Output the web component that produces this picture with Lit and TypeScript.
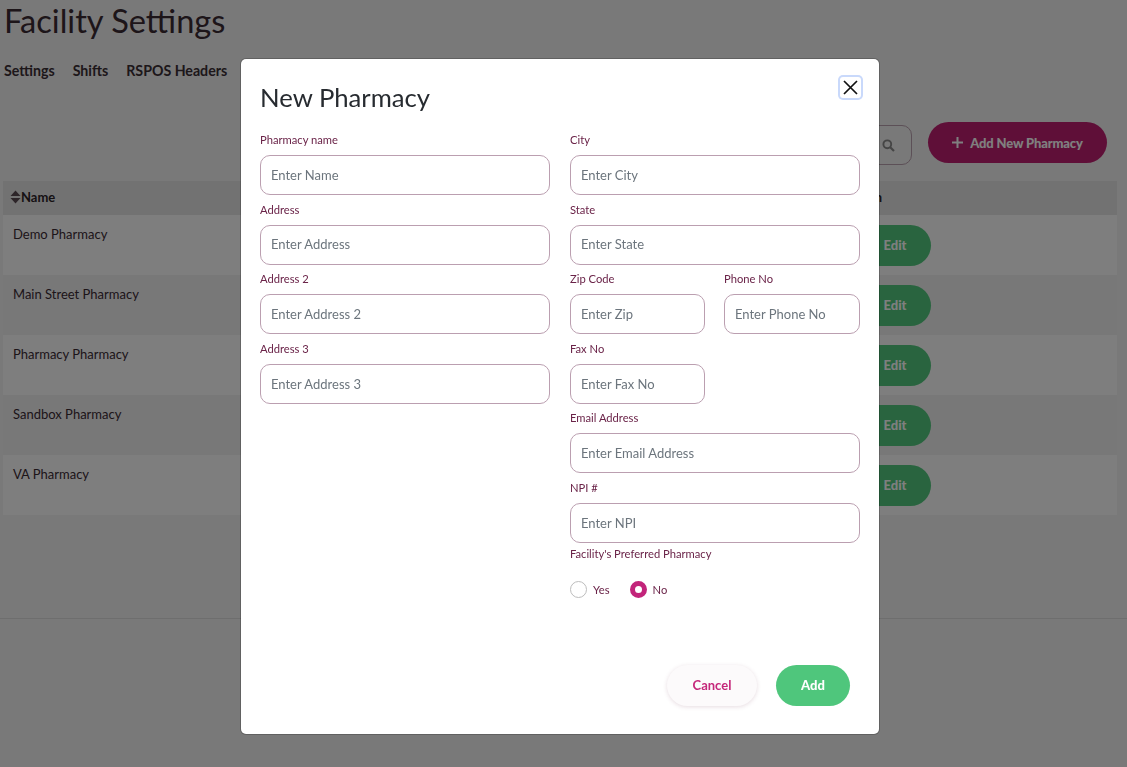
import { LitElement, html, css } from "lit";
import { customElement } from "lit/decorators.js";

const rows = ["Demo Pharmacy", "Main Street Pharmacy", "Pharmacy Pharmacy", "Sandbox Pharmacy", "VA Pharmacy"];

@customElement("app-root")
export class AppRoot extends LitElement {
  static styles = css`
    :host { display: block; font-family: Lato, "Open Sans", sans-serif; color: #212529; background: #f2f2f2; height: 767px; overflow: hidden; }
    * { box-sizing: border-box; }
    .page { padding: 0 10px 0 4px; height: 767px; display: flex; flex-direction: column; }
    h1 { margin: 0; font-size: 32.6px; font-weight: 400; line-height: 42px; color: #3a2a33; }
    .tabs { display: flex; gap: 18px; margin-top: 18px; font-size: 14.2px; font-weight: 700; line-height: 22px; color: #3a2e35; }
    .tools { display: flex; justify-content: flex-end; align-items: flex-start; gap: 16px; margin-top: 40px; padding-right: 10px; height: 59px; }
    .search { width: 200px; height: 40px; margin-top: 3px; border: 1px solid #b9a0ae; border-radius: 10px; display: flex; align-items: center; justify-content: flex-end; padding-right: 16px; }
    .addnew { width: 179px; height: 41px; border-radius: 21px; background: #be1f70; color: #fff; font-size: 13px; letter-spacing: -.15px; font-weight: 900; display: flex; align-items: center; justify-content: center; gap: 7px; }
    .table { margin-left: -1px; }
    .thead { height: 34px; background: #e5e5e5; display: flex; justify-content: space-between; align-items: center; padding: 0 235px 3px 7px; font-size: 13px; font-weight: 700; color: #2c2328; }
    .name { display: flex; align-items: center; }
    .row { height: 60px; display: flex; justify-content: space-between; padding: 10px 186px 0 10px; font-size: 13px; line-height: 18px; color: #3a2a33; }
    .row:nth-child(odd) { background: #fcfcfc; }
    .row:nth-child(even) { background: #f0f0f0; }
    .edit { width: 72px; height: 41px; border-radius: 21px; background: #52c97e; color: #fff; font-size: 13px; font-weight: 900; display: flex; align-items: center; justify-content: center; padding-bottom: 1px; }
    .rule { margin-top: 103px; border-top: 1px solid #dcdcdc; margin-left: -4px; margin-right: -10px; }
    .backdrop { position: fixed; inset: 0; background: rgba(0,0,0,.5); }
    .modal { position: fixed; left: 241px; top: 59px; width: 638px; height: 675px; background: #fff; border-radius: 5px; box-shadow: 0 0 0 1px rgba(0,0,0,.2); padding: 19px 19px; display: flex; flex-direction: column; }
    .close { position: absolute; left: 599px; top: 18px; width: 21px; height: 21px; border: 0; border-radius: 3px; padding: 0; background: #fff; box-shadow: 0 0 0 2px #c9d9fb; display: flex; align-items: center; justify-content: center; }
    h2 { margin: 0; font-size: 25.7px; font-weight: 400; line-height: 38px; color: #272b30; }
    .cols { display: grid; grid-template-columns: 290px 290px; gap: 0 20px; margin-top: 15px; flex: 1; align-content: start; }
    .group { height: 69.6px; }
    label, .lbl { display: block; font-size: 11.2px; line-height: 18px; color: #6a2348; margin-bottom: 6px; }
    .lbl { margin-top: -4px; }
    .input { height: 40px; border: 1px solid #bb9fb0; border-radius: 10px; padding: 0 10px 0.4px; display: flex; align-items: center; font-size: 13px; color: #6c757d; }
    .pair { display: grid; grid-template-columns: 135px 136px; gap: 0 19px; }
    .half { width: 135px; }
    .radios { display: flex; align-items: center; margin-top: 18px; font-size: 11.2px; color: #6a2348; }
    .radio { width: 17px; height: 17px; border-radius: 50%; border: 1px solid #bdbdbd; margin-right: 6px; }
    .radio.on { border: 5px solid #c2247a; }
    .yes { margin-right: 20px; }
    .actions { display: flex; justify-content: flex-end; gap: 19px; padding-right: 10px; margin-bottom: 9px; }
    .btn { height: 41px; border-radius: 21px; font-size: 13px; font-weight: 700; display: flex; align-items: center; justify-content: center; padding-bottom: 1px; }
    .cancel { width: 90px; background: #fcfafb; color: #c5277a; box-shadow: 0 1px 4px rgba(120,60,90,.18); }
    .add { width: 74px; background: #4fc67c; color: #fff; font-weight: 900; }
  `;

  field(labelText: string, ph: string, cls = "") {
    return html`<div class="group ${cls}"><label>${labelText}</label><div class="input">${ph}</div></div>`;
  }

  render() {
    return html`
      <div class="page">
        <h1>Facility Settings</h1>
        <div class="tabs"><span>Settings</span><span>Shifts</span><span>RSPOS Headers</span></div>
        <div class="tools">
          <div class="search">
            <svg width="13" height="13" viewBox="0 0 13 13"><circle cx="5.3" cy="5.3" r="3.9" fill="none" stroke="#8a8a8a" stroke-width="1.9"/><path d="M8.2 8.2L12 12" stroke="#8a8a8a" stroke-width="2.2"/></svg>
          </div>
          <div class="addnew">
            <svg width="11" height="11" viewBox="0 0 11 11"><path d="M5.5 0v11M0 5.5h11" stroke="#fff" stroke-width="2"/></svg>
            <span>Add New Pharmacy</span>
          </div>
        </div>
        <div class="table">
          <div class="thead">
            <span class="name">
              <svg width="11" height="14" viewBox="0 0 11 14"><path d="M5.5 0.5L10.5 6H0.5zM0.5 8H10.5L5.5 13.5z" fill="#5a4a52"/></svg>
              <span>Name</span>
            </span>
            <span>Action</span>
          </div>
          <div>
            ${rows.map((r) => html`<div class="row"><span>${r}</span><span class="edit">Edit</span></div>`)}
          </div>
        </div>
        <div class="rule"></div>
      </div>
      <div class="backdrop"></div>
      <div class="modal">
        <button class="close" aria-label="Close">
          <svg width="15" height="15" viewBox="0 0 15 15"><path d="M1 1L14 14M14 1L1 14" stroke="#111" stroke-width="1.7"/></svg>
        </button>
        <h2>New Pharmacy</h2>
        <div class="cols">
          <div>
            ${this.field("Pharmacy name", "Enter Name")}
            ${this.field("Address", "Enter Address")}
            ${this.field("Address 2", "Enter Address 2")}
            ${this.field("Address 3", "Enter Address 3")}
          </div>
          <div>
            ${this.field("City", "Enter City")}
            ${this.field("State", "Enter State")}
            <div class="pair">
              ${this.field("Zip Code", "Enter Zip")}
              ${this.field("Phone No", "Enter Phone No")}
            </div>
            ${this.field("Fax No", "Enter Fax No", "half")}
            ${this.field("Email Address", "Enter Email Address")}
            ${this.field("NPI #", "Enter NPI")}
            <div class="lbl">Facility's Preferred Pharmacy</div>
            <div class="radios">
              <span class="radio"></span><span class="yes">Yes</span>
              <span class="radio on"></span><span>No</span>
            </div>
          </div>
        </div>
        <div class="actions">
          <div class="btn cancel">Cancel</div>
          <div class="btn add">Add</div>
        </div>
      </div>
    `;
  }
}
